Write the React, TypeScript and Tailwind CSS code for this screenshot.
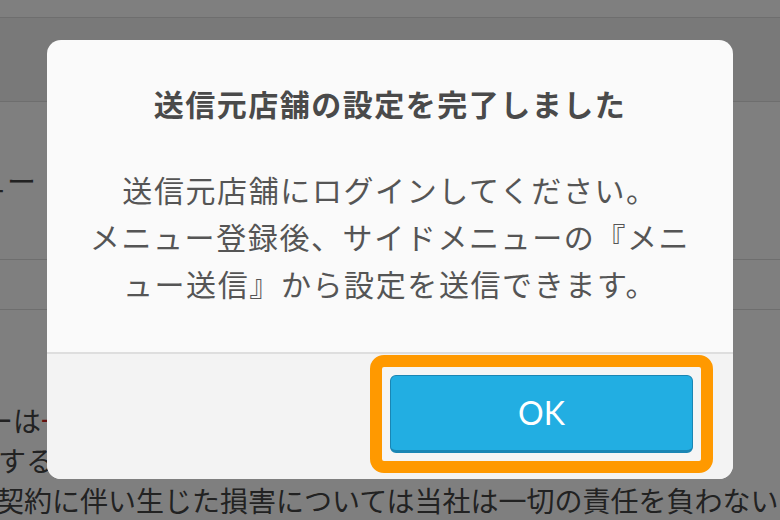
export default function App() {
  return (
    <div className="relative h-[520px] w-[780px] overflow-hidden bg-white font-['Noto_Sans_CJK_JP','Noto_Sans',sans-serif] text-[#444]">
      {/* page behind the dialog */}
      <div className="h-[17px]" />
      <div className="h-[85px] border-y border-[#dcdcdc] bg-[#f3f3f3]" />
      <div className="h-[157px] pt-[55px]">
        <p className="-ml-[22px] text-[29px] leading-[47px] whitespace-nowrap">ュー</p>
      </div>
      <div className="h-[51px] border-y border-[#dcdcdc]" />
      <div className="pt-[90px] text-[28px] leading-[40px] whitespace-nowrap">
        <p className="-ml-[15px]">
          ーは<span className="text-[#cc2020]">一</span>
        </p>
        <p className="-ml-[2px]">する</p>
        <p className="-ml-[4px]">契約に伴い生じた損害については当社は一切の責任を負わないものとします。</p>
      </div>

      {/* dim overlay + dialog */}
      <div className="absolute inset-0 flex justify-center bg-black/50 pt-[40px]">
        <div className="flex h-[439px] w-[686px] flex-col overflow-hidden rounded-[14px] bg-[#fafafa]">
          <h2 className="pt-[40px] text-center text-[30px] font-bold leading-[47px] tracking-[1.5px] text-[#4a4a4a]">
            送信元店舗の設定を完了しました
          </h2>
          <p className="mt-[39px] text-center text-[30px] leading-[47px] tracking-[1.6px] text-[#555]">
            送信元店舗にログインしてください。
            <br />
            メニュー登録後、サイドメニューの『メニ
            <br />
            ュー送信』から設定を送信できます。
          </p>
          <div className="flex-1" />
          <div className="flex h-[127px] justify-end border-t-2 border-[#dedede] bg-[#f3f3f3] pt-[1px] pr-[20px]">
            <div className="h-[118px] w-[343px] rounded-[14px] border-[12px] border-[#ff9900] bg-[#f5f5f5] p-[8px]">
              <button className="flex h-full w-full items-center justify-center rounded-[6px] border border-b-[3px] border-[#1a86b4] bg-[#22aee2] font-['Lato',sans-serif] text-[32px] text-white">
                OK
              </button>
            </div>
          </div>
        </div>
      </div>
    </div>
  );
}
